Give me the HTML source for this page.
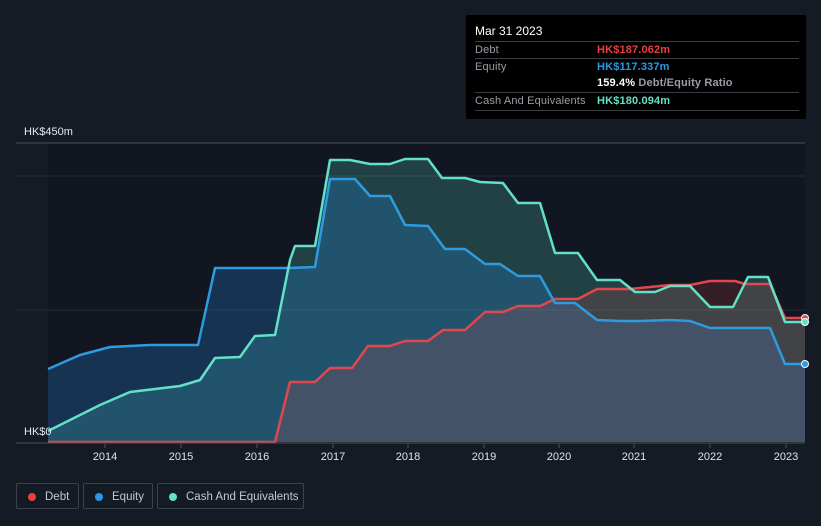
<!DOCTYPE html>
<html><head><style>
body{margin:0;width:821px;height:526px;background:#151b25;font-family:"Liberation Sans",sans-serif;overflow:hidden;position:relative}
.tt{position:absolute;left:466px;top:15px;width:340px;height:104px;background:#000;border-radius:2px}
.tt .h{position:absolute;left:9px;top:9px;color:#fff;font-size:12px}
.row{position:absolute;left:9px;width:324px;border-top:1px solid #3a3d42;font-size:11px;letter-spacing:0.15px;height:17px;line-height:17px;color:#9a9da3;white-space:nowrap}
.row b{position:absolute;left:122px;font-weight:bold}
.lg{position:absolute;top:483px;height:26px;border:1px solid #3c424c;border-radius:2px;color:#c4c8cf;font-size:11.5px;line-height:26px;box-sizing:border-box;white-space:nowrap}
.lg i{position:absolute;left:11px;top:9px;width:8px;height:8px;border-radius:50%}
.lg span{position:absolute;left:28px}
.ax{position:absolute;top:451px;color:#e0e3e8;font-size:11px;width:40px;margin-left:-20px;text-align:center}
</style></head><body>
<svg width="821" height="526" style="position:absolute;left:0;top:0">
<rect x="48" y="143" width="757" height="299" fill="#111620"/>
<line x1="16" y1="143" x2="805" y2="143" stroke="#4a4f58"/>
<line x1="16" y1="176" x2="805" y2="176" stroke="#262b34"/>
<line x1="16" y1="310" x2="805" y2="310" stroke="#262b34"/>
<polygon fill="rgba(90,220,200,0.22)" points="48,442 48,431 100,405 130,392 180,386 200,380 215,358 240,357 255,336 275,335 290,260 295,246 315,246 330,160 350,160 370,164 390,164 405,159 428,159 442,178 465,178 480,182 503,183 518,203 540,203 555,253 578,253 597,280 620,280 635,292 655,292 670,286 690,286 710,307 733,307 748,277 768,277 785,322 805,322 805,442"/>
<polygon fill="rgba(40,140,230,0.25)" points="48,442 48,369 80,355 110,347 150,345 198,345 215,268 290,268 315,267 330,179 355,179 370,196 390,196 405,225 428,226 445,249 465,249 485,264 500,264 518,276 540,276 555,303 575,303 597,320 620,321 640,321 670,320 690,321 710,328 770,328 785,364 805,364 805,442"/>
<polygon fill="rgba(230,80,80,0.17)" points="48,442 275,442 290,382 315,382 330,368 352,368 368,346 390,346 405,341 428,341 443,330 465,330 485,312 503,312 518,306 540,306 555,299 578,299 597,289 630,289 670,285 690,285 710,281 735,281 745,284 770,284 785,318 805,318 805,442"/>
<g fill="none" stroke-width="2.5" stroke-linejoin="round">
<polyline stroke="#e0484e" points="48,442 275,442 290,382 315,382 330,368 352,368 368,346 390,346 405,341 428,341 443,330 465,330 485,312 503,312 518,306 540,306 555,299 578,299 597,289 630,289 670,285 690,285 710,281 735,281 745,284 770,284 785,318 805,318"/>
<polyline stroke="#2d9be0" points="48,369 80,355 110,347 150,345 198,345 215,268 290,268 315,267 330,179 355,179 370,196 390,196 405,225 428,226 445,249 465,249 485,264 500,264 518,276 540,276 555,303 575,303 597,320 620,321 640,321 670,320 690,321 710,328 770,328 785,364 805,364"/>
<polyline stroke="#62e0c8" points="48,431 100,405 130,392 180,386 200,380 215,358 240,357 255,336 275,335 290,260 295,246 315,246 330,160 350,160 370,164 390,164 405,159 428,159 442,178 465,178 480,182 503,183 518,203 540,203 555,253 578,253 597,280 620,280 635,292 655,292 670,286 690,286 710,307 733,307 748,277 768,277 785,322 805,322"/>
</g>
<circle cx="805" cy="318" r="3.5" fill="#e0484e" stroke="#fff" stroke-width="1"/>
<circle cx="805" cy="322" r="3.5" fill="#62e0c8" stroke="#fff" stroke-width="1"/>
<circle cx="805" cy="364" r="3.5" fill="#2d9be0" stroke="#fff" stroke-width="1"/>
<line x1="16" y1="443" x2="805" y2="443" stroke="#4a4f58"/>
<g stroke="#4a4f58"><line x1="105" y1="443" x2="105" y2="448"/><line x1="181" y1="443" x2="181" y2="448"/><line x1="257" y1="443" x2="257" y2="448"/><line x1="333" y1="443" x2="333" y2="448"/><line x1="408" y1="443" x2="408" y2="448"/><line x1="484" y1="443" x2="484" y2="448"/><line x1="559" y1="443" x2="559" y2="448"/><line x1="634" y1="443" x2="634" y2="448"/><line x1="710" y1="443" x2="710" y2="448"/><line x1="786" y1="443" x2="786" y2="448"/></g>
<text x="24" y="135" fill="#e6e8ec" font-size="11" font-family="Liberation Sans">HK$450m</text>
<text x="24" y="435" fill="#e6e8ec" font-size="11" font-family="Liberation Sans">HK$0</text>
</svg>
<div class="ax" style="left:105px">2014</div><div class="ax" style="left:181px">2015</div><div class="ax" style="left:257px">2016</div><div class="ax" style="left:333px">2017</div><div class="ax" style="left:408px">2018</div><div class="ax" style="left:484px">2019</div><div class="ax" style="left:559px">2020</div><div class="ax" style="left:634px">2021</div><div class="ax" style="left:710px">2022</div><div class="ax" style="left:786px">2023</div>
<div class="tt">
<div class="h">Mar 31 2023</div>
<div class="row" style="top:26px">Debt<b style="color:#e8403f">HK$187.062m</b></div>
<div class="row" style="top:43px">Equity<b style="color:#2b98e2">HK$117.337m</b></div>
<div class="row" style="top:60px;border-top:none"><b style="color:#fff">159.4% <span style="color:#9a9da3;font-weight:bold">Debt/Equity Ratio</span></b></div>
<div class="row" style="top:77px">Cash And Equivalents<b style="color:#62e0c8">HK$180.094m</b></div>
<div class="row" style="top:95px;height:0"></div>
</div>
<div class="lg" style="left:16px;width:63px"><i style="background:#e8403f"></i><span>Debt</span></div>
<div class="lg" style="left:83px;width:70px"><i style="background:#2b98e2"></i><span>Equity</span></div>
<div class="lg" style="left:157px;width:147px"><i style="background:#62e0c8"></i><span>Cash And Equivalents</span></div>
</body></html>
